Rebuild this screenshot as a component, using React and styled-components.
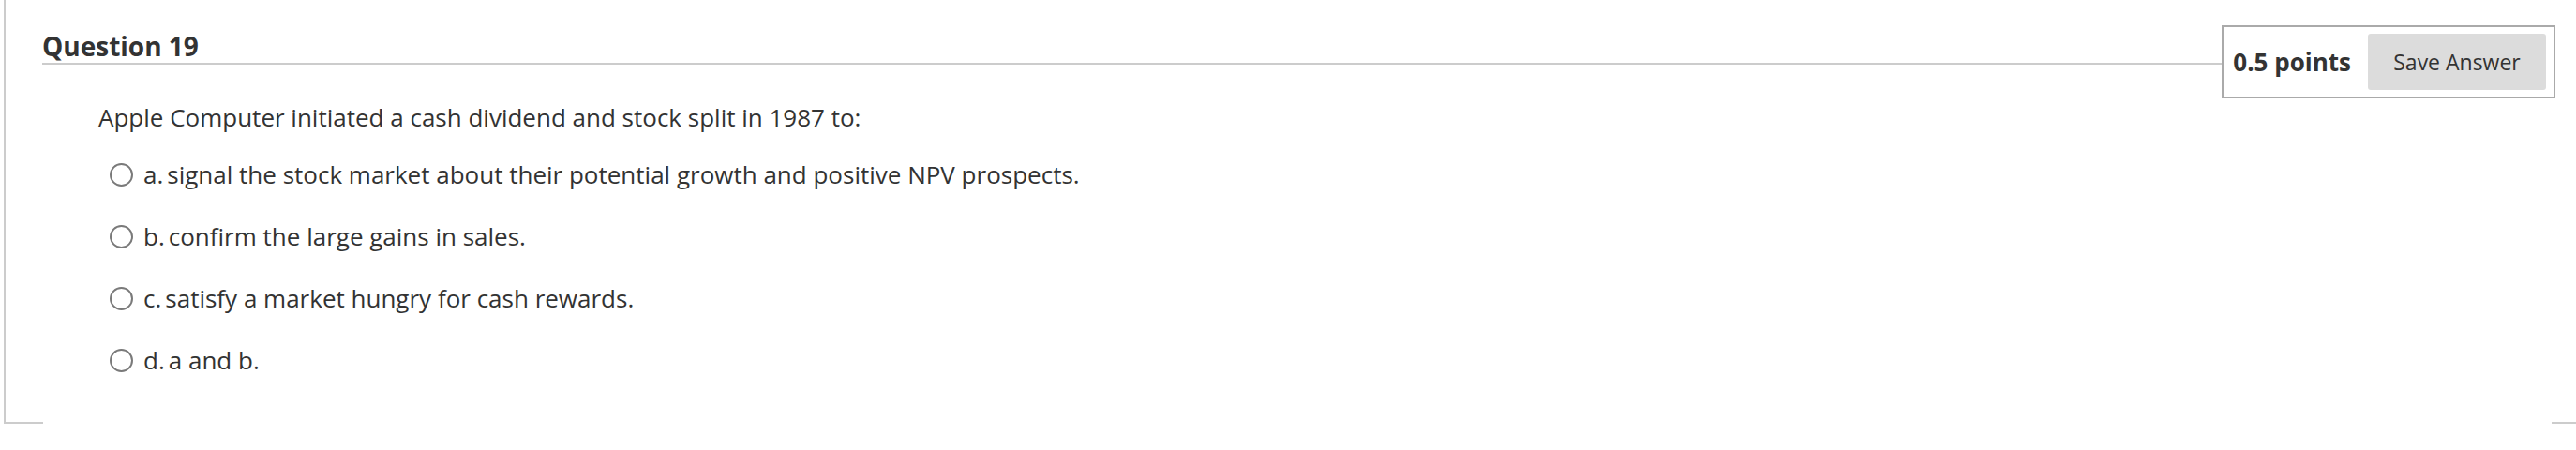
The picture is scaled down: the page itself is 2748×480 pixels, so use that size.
import React from 'react';
import styled, { createGlobalStyle } from 'styled-components';

const GlobalStyle = createGlobalStyle`
  html, body {
    margin: 0;
    padding: 0;
    background: #fff;
  }
  body {
    font-family: "Open Sans", "Liberation Sans", sans-serif;
    color: #333;
  }
`;

const QuestionBlock = styled.section`
  margin-left: 4px;
  height: 452px;
  border-left: 2px solid #ccc;
  display: flex;
  flex-direction: column;
`;

const Header = styled.div`
  display: flex;
  align-items: flex-start;
  margin-top: 27px;
  padding-left: 39px;
  padding-right: 22px;
`;

const Title = styled.h2`
  flex: 1;
  margin: 0;
  padding-top: 4px;
  font-size: 28px;
  font-weight: 700;
  line-height: 36px;
  color: #333;
  border-bottom: 2px solid #ccc;
`;

const PointsBox = styled.div`
  display: flex;
  align-items: center;
  gap: 18px;
  border: 2px solid #aaa;
  padding: 7px 8px 7px 10px;
`;

const Points = styled.span`
  font-size: 26px;
  font-weight: 700;
  color: #333;
`;

const SaveButton = styled.button`
  height: 60px;
  width: 190px;
  border: none;
  border-radius: 3px;
  background: #dcdcdc;
  color: #333;
  font-family: inherit;
  font-size: 23px;
  cursor: pointer;
`;

const Body = styled.div`
  padding-left: 99px;
  margin-top: 2px;
`;

const Prompt = styled.p`
  margin: 0 0 25px;
  font-size: 26px;
  line-height: 36px;
`;

const Options = styled.ul`
  list-style: none;
  margin: 0;
  padding: 0 0 0 12px;
  display: flex;
  flex-direction: column;
  gap: 30px;
`;

const Option = styled.li`
  display: flex;
  align-items: center;
  font-size: 26px;
  line-height: 36px;
`;

const Radio = styled.input.attrs({ type: 'radio' })`
  appearance: none;
  margin: 0 11px 0 0;
  width: 25px;
  height: 25px;
  border: 2px solid #7a7a7a;
  border-radius: 50%;
  background: #fff;
  flex-shrink: 0;
`;

const Letter = styled.span`
  margin-right: 4px;
`;

const Footer = styled.div`
  margin-top: auto;
  margin-left: -2px;
  display: flex;
  justify-content: space-between;
`;

const Rule = styled.span`
  display: block;
  height: 2px;
  width: ${(p) => p.$w}px;
  background: #ccc;
`;

const options = [
  { id: 'a', text: 'signal the stock market about their potential growth and positive NPV prospects.' },
  { id: 'b', text: 'confirm the large gains in sales.' },
  { id: 'c', text: 'satisfy a market hungry for cash rewards.' },
  { id: 'd', text: 'a and b.' },
];

const App = () => {
  return (
    <>
      <GlobalStyle />
      <QuestionBlock>
        <Header>
          <Title>Question 19</Title>
          <PointsBox>
            <Points>0.5 points</Points>
            <SaveButton>Save Answer</SaveButton>
          </PointsBox>
        </Header>
        <Body>
          <Prompt>Apple Computer initiated a cash dividend and stock split in 1987 to:</Prompt>
          <Options>
            {options.map((o) => (
              <Option key={o.id}>
                <Radio name="q19" id={`q19-${o.id}`} />
                <label htmlFor={`q19-${o.id}`}>
                  <Letter>{o.id}.</Letter>
                  {o.text}
                </label>
              </Option>
            ))}
          </Options>
        </Body>
        <Footer>
          <Rule $w={42} />
          <Rule $w={26} />
        </Footer>
      </QuestionBlock>
    </>
  );
};

export default App;
